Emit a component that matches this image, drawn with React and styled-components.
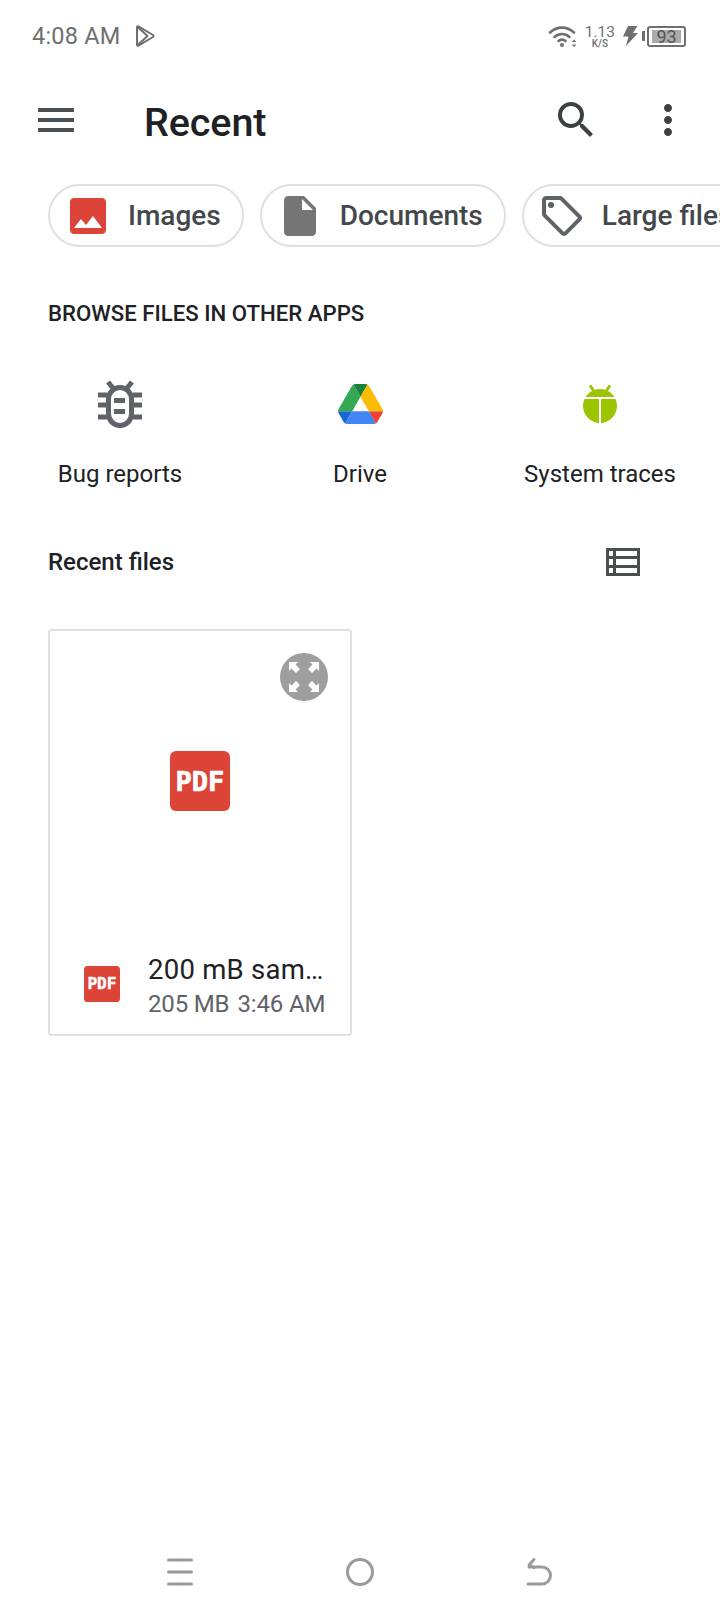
import React from "react";
import styled, { createGlobalStyle } from "styled-components";

const Global = createGlobalStyle`
  html, body { margin: 0; padding: 0; background: #fff; }
  body { font-family: Roboto, "Noto Sans", sans-serif; }
  * { box-sizing: border-box; }
`;

const Page = styled.div`
  width: 720px; height: 1612px; background: #fff; overflow: hidden;
  display: flex; flex-direction: column;
`;
const StatusBar = styled.div`
  height: 72px; flex: none; display: flex; align-items: center; padding: 0 34px 0 32px; color: #6f6f6f;
`;
const Time = styled.span`
  font-size: 23.5px; letter-spacing: 0.2px; margin-right: 15px;
`;
const StatusRight = styled.div`
  margin-left: auto; display: flex; align-items: center;
`;
const Speed = styled.div`
  display: flex; flex-direction: column; align-items: center; margin: 0 8px 0 7px; line-height: 1;
`;
const SpeedValue = styled.span`font-size: 15.5px; height: 14px; line-height: 14px;`;
const SpeedUnit = styled.span`font-size: 10px; font-weight: 500; height: 9px; line-height: 9px;`;
const BatteryNub = styled.span`
  width: 3px; height: 10px; background: #6f6f6f; border-radius: 1px 0 0 1px; margin: 0 2px 0 4px;
`;
const Battery = styled.div`
  width: 39px; height: 21px; border: 2px solid #6f6f6f; border-radius: 3px; padding: 2px 3px; display: flex;
`;
const BatteryLevel = styled.div`
  flex: 1; background: #ababab; font-size: 18px; line-height: 14px; color: #555; text-align: center;
`;
const AppBar = styled.div`
  height: 96px; flex: none; display: flex; align-items: center; padding: 0 28px 0 32px;
`;
const Title = styled.h1`
  margin: 0 0 0 64px; padding-top: 5px; font-size: 39.5px; font-weight: 500; color: #202124; flex: 1; letter-spacing: -0.1px;
`;
const IconBox = styled.svg`
  width: 48px; height: 48px; display: block; flex: none; fill: #3c4043;
`;
const ActionGap = styled.div`width: 44px; flex: none;`;
const Chips = styled.div`
  display: flex; gap: 16px; margin-top: 16px; padding-left: 48px; overflow: hidden; flex: none;
`;
const Chip = styled.div`
  height: 63px; flex: none; display: flex; align-items: center; gap: 16px; padding: 0 21px 0 14px;
  border: 2px solid #e0e0e0; border-radius: 32px; font-size: 28px; font-weight: 500; color: #44484c;
`;
const SectionTitle = styled.div`
  margin: 52px 0 0 48px; font-size: 22.2px; font-weight: 500; color: #202124; line-height: 28px;
`;
const RootGrid = styled.div`
  display: grid; grid-template-columns: repeat(3, 240px); margin-top: 49px;
`;
const RootItem = styled.div`
  display: flex; flex-direction: column; align-items: center; font-size: 24px; color: #202124;
`;
const RootIcon = styled.div`
  height: 56px; display: flex; align-items: center; justify-content: center;
`;
const RootLabel = styled.div`margin-top: 26px; line-height: 32px;`;
const ListHeader = styled.div`
  display: flex; align-items: center; justify-content: space-between; margin-top: 48px; padding: 0 80px 0 48px; height: 48px;
`;
const ListTitle = styled.div`font-size: 24px; font-weight: 500; color: #202124;`;
const Card = styled.div`
  position: relative; margin: 43px 0 0 48px; width: 304px; height: 407px; border: 2px solid #e0e0e0; border-radius: 4px;
  display: flex; flex-direction: column;
`;
const Expand = styled.div`
  position: absolute; top: 22px; right: 22px; width: 48px; height: 48px; border-radius: 50%; background: #9e9e9e;
  display: flex; align-items: center; justify-content: center;
`;
const Thumb = styled.div`
  height: 300px; flex: none; display: flex; align-items: center; justify-content: center;
`;
const PdfIcon = styled.div`
  width: ${p => p.$size}px; height: ${p => p.$size}px; border-radius: ${p => p.$size / 10}px; background: #db4437; color: #fff;
  font-family: "DejaVu Sans Mono", monospace; font-weight: 700; font-size: ${p => p.$size * 0.45}px;
  -webkit-text-stroke: ${p => p.$size * 0.012}px #fff;
  display: flex; align-items: center; justify-content: center; flex: none; line-height: 1;
`;
const Footer = styled.div`
  display: flex; align-items: flex-start; padding: 21px 0 0 34px;
`;
const FooterIcon = styled.div`margin-top: 14px;`;
const FooterText = styled.div`
  margin-left: 28px; width: 178px; display: flex; flex-direction: column;
`;
const FileName = styled.div`
  font-size: 27.5px; line-height: 36px; color: #202124; white-space: nowrap; letter-spacing: 0.25px;
`;
const FileMeta = styled.div`
  font-size: 24px; line-height: 33px; color: #5f6368; white-space: nowrap; display: flex; gap: 8px; letter-spacing: -0.15px;
`;
const NavBar = styled.div`
  margin-top: auto; height: 80px; flex: none; display: flex; align-items: center; justify-content: center; gap: 152px;
`;

const Menu = () => (
  <IconBox viewBox="0 0 24 24"><path d="M3 18h18v-2H3v2zm0-5h18v-2H3v2zm0-7v2h18V6H3z" fill="#4a4f54" /></IconBox>
);
const Search = () => (
  <IconBox viewBox="0 0 24 24"><path d="M15.5 14h-.79l-.28-.27A6.471 6.471 0 0 0 16 9.5 6.5 6.5 0 1 0 9.5 16c1.61 0 3.09-.59 4.23-1.57l.27.28v.79l5 4.99L20.49 19l-4.99-5zm-6 0C7.01 14 5 11.99 5 9.5S7.01 5 9.5 5 14 7.01 14 9.5 11.99 14 9.5 14z" /></IconBox>
);
const More = () => (
  <IconBox viewBox="0 0 24 24"><path d="M12 8c1.1 0 2-.9 2-2s-.9-2-2-2-2 .9-2 2 .9 2 2 2zm0 2c-1.1 0-2 .9-2 2s.9 2 2 2 2-.9 2-2-.9-2-2-2zm0 6c-1.1 0-2 .9-2 2s.9 2 2 2 2-.9 2-2-.9-2-2-2z" /></IconBox>
);
const Play = () => (
  <svg width="20" height="22" viewBox="0 0 20 22" fill="none" stroke="#6f6f6f" strokeWidth="2" strokeLinejoin="round">
    <path d="M2 2.200c0-.8.7-1.200 1.400-.8L18 10c.8.5.8 1.500 0 2L3.400 20.600c-.7.4-1.400 0-1.400-.8z" />
    <path d="M2.500 1.800 12.500 11 2.500 20.200" />
  </svg>
);
const Wifi = () => (
  <svg width="30" height="24" viewBox="0 0 30 24" fill="none" stroke="#6f6f6f" strokeWidth="2.600" strokeLinecap="round">
    <path d="M2 8.500C9 2 19 2 26 8.500" /><path d="M6.500 13C11 9 17 9 21.500 13" /><path d="M10.500 17c2-1.600 5-1.600 7 0" />
    <circle cx="14" cy="21" r="2" fill="#6f6f6f" stroke="none" />
    <path d="M26 15.500l2.200 2.400h-4.400zM26 23l2.200-2.400h-4.400z" fill="#6f6f6f" stroke="none" />
  </svg>
);
const Bolt = () => (
  <svg width="15" height="20" viewBox="0 0 15 20"><path d="M5 0h9.500L10 7h5L3 20l2.500-9.500H0z" fill="#6f6f6f" /></svg>
);
const Image = () => (
  <IconBox viewBox="0 0 24 24"><path fill="#db4437" d="M21 19V5c0-1.100-.9-2-2-2H5c-1.100 0-2 .9-2 2v14c0 1.100.9 2 2 2h14c1.100 0 2-.9 2-2zM8.500 13.500l2.500 3.010L14.500 12l4.500 6H5l3.500-4.500z" /></IconBox>
);
const Doc = () => (
  <IconBox viewBox="0 0 24 24"><path fill="#757575" d="M6 2c-1.100 0-1.990.9-1.990 2L4 20c0 1.100.89 2 1.990 2H18c1.100 0 2-.9 2-2V8l-6-6H6zm7 7V3.500L18.500 9H13z" /></IconBox>
);
const Tag = () => (
  <IconBox viewBox="0 0 24 24"><path fill="#5f6368" d="M21.410 11.580l-9-9C12.050 2.220 11.550 2 11 2H4c-1.100 0-2 .9-2 2v7c0 .55.22 1.050.59 1.420l9 9c.36.36.86.58 1.410.58s1.050-.22 1.410-.59l7-7c.37-.36.59-.86.59-1.410s-.23-1.060-.59-1.420zM13 20.010L4 11V4h7v-.01l9 9-7 7.020z" /><circle cx="6.500" cy="6.500" r="1.500" fill="#5f6368" /></IconBox>
);
const Bug = () => (
  <svg width="44" height="48" viewBox="0 0 44 48" fill="none" stroke="#5f6368" strokeWidth="5">
    <rect x="10.500" y="7.500" width="23" height="38" rx="11.500" />
    <path d="M10 2l5 6M34 2l-5 6" />
    <path d="M0 15h9M0 25h9M0 37h9M35 15h9M35 25h9M35 37h9" />
    <path d="M16 20.500h11M16 31.500h11" />
  </svg>
);
const Drive = () => (
  <svg width="45" height="40" viewBox="0 0 87.300 78">
    <path d="m6.600 66.850 3.850 6.650c.8 1.400 1.950 2.500 3.300 3.300l13.750-23.800h-27.500c0 1.550.4 3.100 1.200 4.500z" fill="#1967d2" />
    <path d="m43.650 25-13.750-23.800c-1.350.8-2.500 1.900-3.300 3.300l-25.400 44a9.060 9.060 0 0 0 -1.200 4.500h27.500z" fill="#34a853" />
    <path d="m73.550 76.800c1.350-.8 2.500-1.900 3.300-3.300l1.600-2.750 7.650-13.250c.8-1.400 1.200-2.950 1.200-4.500h-27.502l5.852 11.500z" fill="#ea4335" />
    <path d="m43.650 25 13.750-23.800c-1.350-.8-2.900-1.200-4.500-1.200h-18.500c-1.600 0-3.150.45-4.500 1.200z" fill="#188038" />
    <path d="m59.800 53h-32.300l-13.750 23.800c1.350.8 2.900 1.200 4.500 1.200h50.800c1.600 0 3.150-.45 4.500-1.200z" fill="#4285f4" />
    <path d="m73.400 26.500-12.700-22c-.8-1.400-1.950-2.500-3.300-3.300l-13.750 23.800 16.150 28h27.450c0-1.550-.4-3.100-1.200-4.500z" fill="#fbbc04" />
  </svg>
);
const Android = () => (
  <svg width="34" height="38" viewBox="0 0 34 38">
    <path d="M7 .5l4.500 6.500M27 .5l-4.500 6.500" stroke="#9cc400" strokeWidth="3" />
    <circle cx="17" cy="21" r="17" fill="#9cc400" />
    <path d="M0 13h34M17 13v25" stroke="#fff" strokeWidth="2" />
  </svg>
);
const ListIcon = () => (
  <svg width="34" height="28" viewBox="0 0 34 28"><path fillRule="evenodd" fill="#4a4f54" d="M0 0h34v28H0zM3 3v5h4V3zm7 0v5h21V3zM3 11v6h4v-6zm7 0v6h21v-6zM3 20v5h4v-5zm7 0v5h21v-5z" /></svg>
);
const ExpandIcon = () => (
  <svg width="30" height="30" viewBox="0 0 30 30" fill="#fff">
    <path d="M0 0h9L6.500 2.500 11 7 7 11 2.500 6.500 0 9zM30 0v9l-2.500-2.500L23 11l-4-4 4.500-4.500L21 0zM0 30v-9l2.500 2.500L7 19l4 4-4.500 4.500L9 30zM30 30h-9l2.500-2.500L19 23l4-4 4.500 4.500L30 21z" />
  </svg>
);
const NavMenu = () => (
  <svg width="28" height="28" viewBox="0 0 28 28" stroke="#9a9a9a" strokeWidth="3" strokeLinecap="round"><path d="M2.500 2h23M2.500 14h23M2.500 26h23" /></svg>
);
const NavHome = () => (
  <svg width="28" height="28" viewBox="0 0 28 28" fill="none" stroke="#9a9a9a" strokeWidth="3"><circle cx="14" cy="14" r="12.500" /></svg>
);
const NavBack = () => (
  <svg width="28" height="30" viewBox="0 0 28 30" fill="none" stroke="#9a9a9a" strokeWidth="3" strokeLinecap="round" strokeLinejoin="round">
    <path d="M2 27h14a8.500 8.500 0 0 0 0-17H3" /><path d="M8 2.500 3 8l5 2.500" />
  </svg>
);

export default function App() {
  return (
    <Page>
      <Global />
      <StatusBar>
        <Time>4:08 AM</Time>
        <Play />
        <StatusRight>
          <Wifi />
          <Speed><SpeedValue>1.13</SpeedValue><SpeedUnit>K/S</SpeedUnit></Speed>
          <Bolt />
          <BatteryNub />
          <Battery><BatteryLevel>93</BatteryLevel></Battery>
        </StatusRight>
      </StatusBar>
      <AppBar>
        <Menu />
        <Title>Recent</Title>
        <Search />
        <ActionGap />
        <More />
      </AppBar>
      <Chips>
        <Chip><Image />Images</Chip>
        <Chip><Doc />Documents</Chip>
        <Chip><Tag />Large files</Chip>
      </Chips>
      <SectionTitle>BROWSE FILES IN OTHER APPS</SectionTitle>
      <RootGrid>
        <RootItem><RootIcon><Bug /></RootIcon><RootLabel>Bug reports</RootLabel></RootItem>
        <RootItem><RootIcon><Drive /></RootIcon><RootLabel>Drive</RootLabel></RootItem>
        <RootItem><RootIcon><Android /></RootIcon><RootLabel>System traces</RootLabel></RootItem>
      </RootGrid>
      <ListHeader>
        <ListTitle>Recent files</ListTitle>
        <ListIcon />
      </ListHeader>
      <Card>
        <Expand><ExpandIcon /></Expand>
        <Thumb><PdfIcon $size={60}>PDF</PdfIcon></Thumb>
        <Footer>
          <FooterIcon><PdfIcon $size={36}>PDF</PdfIcon></FooterIcon>
          <FooterText>
            <FileName>200 mB sam…</FileName>
            <FileMeta><span>205 MB</span><span>3:46 AM</span></FileMeta>
          </FooterText>
        </Footer>
      </Card>
      <NavBar>
        <NavMenu />
        <NavHome />
        <NavBack />
      </NavBar>
    </Page>
  );
}
